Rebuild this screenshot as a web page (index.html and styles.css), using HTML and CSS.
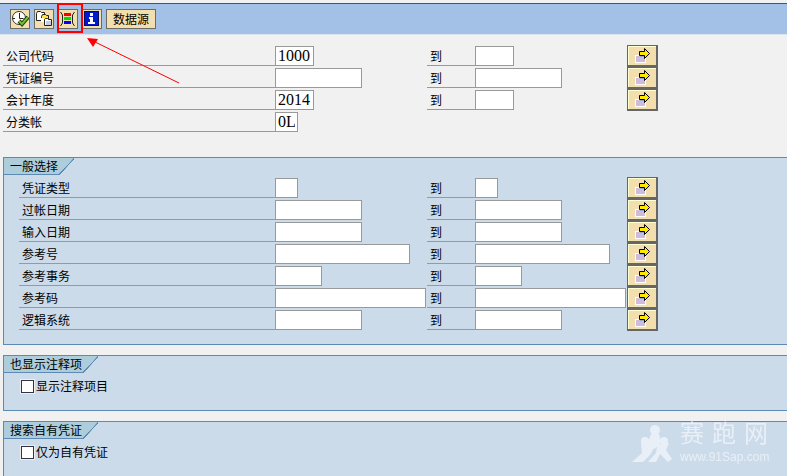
FILE: index.html
```html
<!DOCTYPE html>
<html lang="zh-CN">
<head>
    <meta charset="UTF-8">
    <meta name="viewport" content="width=device-width, initial-scale=1.0">
    <title>数据源</title>
    <link rel="stylesheet" href="styles.css">
</head>
<body>
    <svg class="defs" aria-hidden="true">
        <symbol id="multi" viewBox="0 0 16 16">
            <rect x="0" y="7" width="11" height="8" fill="#fff"/>
            <rect x="1" y="8" width="9" height="6" fill="#d0bbdc"/>
            <path d="M5 8h4v1H5z" fill="#8fa8dc"/>
            <path d="M4.5 3.5h5v-3l5 5-5 5v-3h-5z" fill="#ffe800" stroke="#000"/>
        </symbol>
    </svg>

    <div class="toolbar">
        <button type="button" class="tool" aria-label="执行">
            <svg viewBox="0 0 18 18">
                <circle cx="8" cy="8" r="6.5" fill="#fff" stroke="#333"/>
                <path d="M8.5 3v5.500h4M2 8.500h2M8.500 12v2" fill="none" stroke="#222"/>
                <path d="M8 11l3 3 6-7" fill="none" stroke="#173d00" stroke-width="4"/>
                <path d="M8 11l3 3 6-7" fill="none" stroke="#79bb35" stroke-width="2"/>
            </svg>
        </button>
        <button type="button" class="tool" aria-label="获取变式">
            <svg viewBox="0 0 18 18">
                <path d="M1.5 3.5l1-2h3l1 1h3v8h-8z" fill="#fff" stroke="#222"/>
                <path d="M6.5 6.5l1-2h3l1 1h2v6h-7z" fill="#ffe23c" stroke="#222"/>
                <path d="M6 8h3v4H6z" fill="#fff"/>
                <path d="M9.5 9.5l1-1h2l1 1h3v6h-7z" fill="#fff" stroke="#222"/>
                <path d="M11 11h5v4h-5z" fill="#c3cfe4"/>
            </svg>
        </button>
        <span class="marked">
            <button type="button" class="tool" aria-label="动态选择">
                <svg viewBox="0 0 18 18">
                    <path d="M1.5 2l2 3v8l-2 3M15.5 2l-2 3v8l2 3" fill="none" stroke="#222"/>
                    <path d="M5 3h7v3H5z" fill="#f00"/>
                    <path d="M5 7h7v3H5z" fill="#0d0"/>
                    <path d="M5 11h7v3H5z" fill="#00f"/>
                </svg>
            </button>
        </span>
        <button type="button" class="tool" aria-label="信息">
            <svg viewBox="0 0 18 18">
                <rect x="1.5" y="1.5" width="14" height="14" fill="#0018d0" stroke="#001060"/>
                <path d="M7 3h3v3H7zM6 7h4v5h2v2H5v-2h2V9H6z" fill="#fff"/>
            </svg>
        </button>
        <button type="button" class="tool-text">数据源</button>
    </div>

    <svg class="pointer" viewBox="0 0 94 48" aria-hidden="true">
        <path d="M6 3l86 42" stroke="#f00" fill="none"/>
        <path d="M0 0l11 1-5 8z" fill="#f00"/>
    </svg>

    <form class="selection">
        <div class="rows">
            <div class="row">
                <label for="bukrs">公司代码</label>
                <div class="field"><input type="text" id="bukrs" class="w4" value="1000"></div>
                <label for="bukrs-to">到</label>
                <div class="field"><input type="text" id="bukrs-to" class="w4"></div>
                <button type="button" class="multi" aria-label="多项选择"><svg><use href="#multi"/></svg></button>
            </div>
            <div class="row">
                <label for="belnr">凭证编号</label>
                <div class="field"><input type="text" id="belnr" class="w10"></div>
                <label for="belnr-to">到</label>
                <div class="field"><input type="text" id="belnr-to" class="w10"></div>
                <button type="button" class="multi" aria-label="多项选择"><svg><use href="#multi"/></svg></button>
            </div>
            <div class="row">
                <label for="gjahr">会计年度</label>
                <div class="field"><input type="text" id="gjahr" class="w4" value="2014"></div>
                <label for="gjahr-to">到</label>
                <div class="field"><input type="text" id="gjahr-to" class="w4"></div>
                <button type="button" class="multi" aria-label="多项选择"><svg><use href="#multi"/></svg></button>
            </div>
            <div class="row">
                <label for="rldnr">分类帐</label>
                <div class="field"><input type="text" id="rldnr" class="w2" value="0L"></div>
            </div>
        </div>

        <section class="group">
            <h2 class="tab">一般选择</h2>
            <div class="rows">
                <div class="row">
                    <label for="blart">凭证类型</label>
                    <div class="field"><input type="text" id="blart" class="w2"></div>
                    <label for="blart-to">到</label>
                    <div class="field"><input type="text" id="blart-to" class="w2"></div>
                    <button type="button" class="multi" aria-label="多项选择"><svg><use href="#multi"/></svg></button>
                </div>
                <div class="row">
                    <label for="budat">过帐日期</label>
                    <div class="field"><input type="text" id="budat" class="w10"></div>
                    <label for="budat-to">到</label>
                    <div class="field"><input type="text" id="budat-to" class="w10"></div>
                    <button type="button" class="multi" aria-label="多项选择"><svg><use href="#multi"/></svg></button>
                </div>
                <div class="row">
                    <label for="cpudt">输入日期</label>
                    <div class="field"><input type="text" id="cpudt" class="w10"></div>
                    <label for="cpudt-to">到</label>
                    <div class="field"><input type="text" id="cpudt-to" class="w10"></div>
                    <button type="button" class="multi" aria-label="多项选择"><svg><use href="#multi"/></svg></button>
                </div>
                <div class="row">
                    <label for="xblnr">参考号</label>
                    <div class="field"><input type="text" id="xblnr" class="w16"></div>
                    <label for="xblnr-to">到</label>
                    <div class="field"><input type="text" id="xblnr-to" class="w16"></div>
                    <button type="button" class="multi" aria-label="多项选择"><svg><use href="#multi"/></svg></button>
                </div>
                <div class="row">
                    <label for="awtyp">参考事务</label>
                    <div class="field"><input type="text" id="awtyp" class="w5"></div>
                    <label for="awtyp-to">到</label>
                    <div class="field"><input type="text" id="awtyp-to" class="w5"></div>
                    <button type="button" class="multi" aria-label="多项选择"><svg><use href="#multi"/></svg></button>
                </div>
                <div class="row">
                    <label for="awkey">参考码</label>
                    <div class="field"><input type="text" id="awkey" class="w20"></div>
                    <label for="awkey-to">到</label>
                    <div class="field"><input type="text" id="awkey-to" class="w20"></div>
                    <button type="button" class="multi" aria-label="多项选择"><svg><use href="#multi"/></svg></button>
                </div>
                <div class="row">
                    <label for="awsys">逻辑系统</label>
                    <div class="field"><input type="text" id="awsys" class="w10"></div>
                    <label for="awsys-to">到</label>
                    <div class="field"><input type="text" id="awsys-to" class="w10"></div>
                    <button type="button" class="multi" aria-label="多项选择"><svg><use href="#multi"/></svg></button>
                </div>
            </div>
        </section>

        <section class="group">
            <h2 class="tab">也显示注释项</h2>
            <div class="check">
                <input type="checkbox" id="noted">
                <label for="noted">显示注释项目</label>
            </div>
        </section>

        <section class="group last">
            <h2 class="tab">搜索自有凭证</h2>
            <div class="check">
                <input type="checkbox" id="own">
                <label for="own">仅为自有凭证</label>
            </div>
        </section>
    </form>

    <div class="watermark">
        <svg viewBox="0 0 40 40" aria-hidden="true">
            <circle cx="23" cy="6" r="5"/>
            <circle cx="13" cy="17" r="4"/>
            <circle cx="32" cy="17" r="4"/>
            <path d="M19 10h8l2 8-6 7-7-7zM9 19l9-3 4 8-4 7-7 7H0l10-9zM27 20l10-1-3 7 6 9-4 3-8-8-4 8h-8l8-9 1-6z"/>
        </svg>
        <div class="brand">
            <div class="brand-name"><span>赛</span><span>跑</span><span>网</span></div>
            <div class="brand-url">www.91Sap.com</div>
        </div>
    </div>
</body>
</html>
```
FILE: styles.css
```css
* {
    box-sizing: border-box;
}

body {
    margin: 0;
    padding-top: 3px;
    min-height: 100vh;
    display: flex;
    flex-direction: column;
    background-color: #f1f1f1;
    color: #000;
    font-family: "Liberation Sans", "Noto Sans CJK SC", sans-serif;
    font-size: 12px;
    line-height: 16px;
}

button, input {
    font: inherit;
    color: inherit;
    margin: 0;
    padding: 0;
    border-radius: 0;
}

.defs {
    display: none;
}

/* Toolbar */
.toolbar {
    display: flex;
    align-items: center;
    gap: 4px;
    height: 32px;
    padding: 0 10px;
    border-top: 1px solid #1c5fa5;
    border-bottom: 1px solid #dbe5f2;
    background-color: #a3c0e6;
}

.tool, .tool-text {
    display: block;
    height: 20px;
    border: 1px solid #6b6b63;
    background-color: #f3dfae;
}

.tool {
    width: 20px;
}

.tool svg {
    display: block;
    width: 18px;
    height: 18px;
}

.tool-text {
    width: 50px;
    padding-top: 2px;
    white-space: nowrap;
}

.marked {
    position: relative;
}

.marked::after {
    content: "";
    position: absolute;
    inset: -6px -5px -4px -1px;
    border: 2px solid #f00;
}

.pointer {
    position: absolute;
    left: 87px;
    top: 38px;
    width: 94px;
    height: 48px;
}

/* Selection rows */
.selection {
    flex: 1;
    display: flex;
    flex-direction: column;
    gap: 10px;
    padding: 10px 0 0 3px;
}

.selection > .rows {
    margin-bottom: 14px;
}

.row {
    display: grid;
    grid-template-columns: 272px 152px 48px 152px 31px;
    height: 22px;
}

.row label {
    height: 20px;
    margin-top: 1px;
    padding: 4px 3px 0;
    border-bottom: 1px solid #999;
    line-height: 15px;
}

.field {
    padding: 1px 0;
}

.field input {
    display: block;
    height: 20px;
    padding: 0 2px;
    border: 1px solid #999;
    background-color: #fff;
    font-family: "Liberation Serif", serif;
    font-size: 16px;
}

.w2 { width: 23px; }
.w4 { width: 39px; }
.w5 { width: 47px; }
.w10 { width: 87px; }
.w16 { width: 135px; }
.w20 { width: 151px; }

.multi {
    height: 22px;
    padding-left: 7px;
    border: solid #666;
    border-width: 1px 2px 2px 1px;
    background-color: #f3dfae;
    box-shadow: inset 1px 1px #ffffd0;
}

.multi svg {
    display: block;
    width: 16px;
    height: 16px;
}

/* Groups */
.group {
    border: solid #5c8ab5;
    border-width: 1px 0 1px 1px;
    background-color: #cbdbea;
    padding-bottom: 13px;
}

.group .rows {
    padding: 2px 0 0 15px;
}

.group .row {
    grid-template-columns: 256px 152px 48px 152px 31px;
}

.tab {
    position: relative;
    width: fit-content;
    height: 17px;
    margin: 0;
    padding: 0 16px 0 6px;
    background: linear-gradient(to bottom right, #accdd9 49%, #5c8ab5 50%, #5c8ab5 54%, transparent 55%) right / 16px 17px no-repeat,
        linear-gradient(#accdd9, #accdd9) left / calc(100% - 16px) 100% no-repeat;
    font-size: 12px;
    font-weight: normal;
    line-height: 18px;
}

.tab::after {
    content: "";
    position: absolute;
    left: 0;
    right: 16px;
    bottom: 0;
    border-bottom: 1px solid #5c8ab5;
}

.check {
    display: flex;
    align-items: center;
    gap: 2px;
    height: 24px;
    padding: 3px 0 0 17px;
}

.check input {
    appearance: none;
    width: 13px;
    height: 13px;
    border: 1px solid #333344;
    outline: 1px solid #eee;
    background-color: #fff;
}

.check input:checked {
    background-color: #336;
}

.last {
    flex: 1;
    border-bottom: 0;
}

/* Watermark */
.watermark {
    position: fixed;
    right: 19px;
    bottom: 12px;
    display: flex;
    align-items: flex-end;
    gap: 8px;
    color: #e9eff7;
    pointer-events: none;
}

.watermark svg {
    width: 40px;
    height: 40px;
    fill: #e9eff7;
}

.brand {
    width: 88px;
}

.brand-name {
    display: flex;
    justify-content: space-between;
    font-family: "Noto Sans CJK SC", sans-serif;
    font-size: 24px;
    line-height: 36px;
}

.brand-url {
    font-size: 12px;
    line-height: 14px;
}
```
